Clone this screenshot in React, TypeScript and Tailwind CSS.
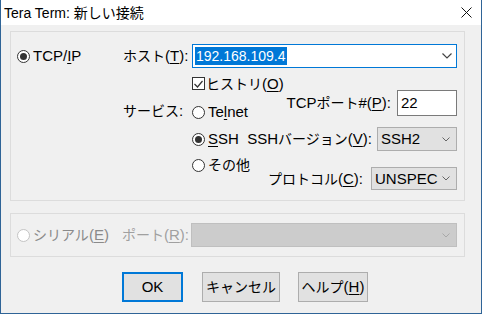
import React from "react";

const Radio = ({ checked, disabled }: { checked?: boolean; disabled?: boolean }) => (
  <span
    className={`flex w-[13px] h-[13px] shrink-0 items-center justify-center rounded-full border bg-white ${
      disabled ? "border-[#c4c4c4]" : "border-[#333333]"
    }`}
  >
    {checked && <span className="w-[7px] h-[7px] rounded-full bg-[#333333]" />}
  </span>
);

const Chevron = ({ color = "#444444", small }: { color?: string; small?: boolean }) =>
  small ? (
    <svg width="8" height="5" viewBox="0 0 8 5" className="ml-auto shrink-0">
      <path d="M0.5 0.5 L4 4 L7.5 0.5" stroke={color} fill="none" strokeWidth="1" />
    </svg>
  ) : (
    <svg width="10" height="6" viewBox="0 0 10 6" className="ml-auto shrink-0">
      <path d="M0.5 0.5 L5 5 L9.5 0.5" stroke={color} fill="none" strokeWidth="1.2" />
    </svg>
  );

const U = ({ children }: { children: React.ReactNode }) => (
  <span className="underline underline-offset-[2px] decoration-1">{children}</span>
);

// japanese runs are set a bit smaller, the kana in the original are narrow
const J = ({ children }: { children: React.ReactNode }) => <span className="text-[14px]">{children}</span>;

export default function App() {
  return (
    <div className="w-[482px] h-[314px] bg-[#f0f0f0] border-x border-b border-[#2f6497] flex flex-col text-[15px] leading-[18px] text-black whitespace-nowrap font-['Liberation_Sans','Noto_Sans_CJK_JP',sans-serif]">
      {/* title bar */}
      <div className="h-[25px] shrink-0 bg-white flex items-center pl-[3px] pr-[9px] text-[14px]">
        <span>Tera Term: 新しい接続</span>
        <svg width="11" height="11" viewBox="0 0 11 11" className="ml-auto">
          <path d="M0.5 0.5 L10.5 10.5 M10.5 0.5 L0.5 10.5" stroke="#111111" strokeWidth="1" />
        </svg>
      </div>

      <div className="flex flex-col px-[9px] pt-[6px]">
        {/* TCP/IP group */}
        <div className="w-[455px] h-[170px] border border-[#dcdcdc] flex pt-[12px] pl-[6px] pr-[7px]">
          <div className="w-[106px] h-[24px] flex items-center gap-[3px] shrink-0">
            <Radio checked />
            <span>
              TCP/<U>I</U>P
            </span>
          </div>

          <div className="flex-1 flex flex-col">
            <div className="flex h-[24px] items-center">
              <span className="w-[69px] shrink-0">
                <J>ホスト</J>(<U>T</U>):
              </span>
              <div className="w-[265px] h-[24px] border border-[#0078d7] bg-white flex items-center pl-[2px] pr-[4px]">
                <span className="bg-[#0078d7] text-white text-[14px] px-[1px]">192.168.109.4</span>
                <Chevron />
              </div>
            </div>

            <div className="mt-[9px] h-[13px] flex items-center pl-[69px] gap-[1px]">
              <span className="w-[13px] h-[13px] border border-[#333333] bg-white flex items-center justify-center">
                <svg width="9" height="8" viewBox="0 0 9 8">
                  <path d="M0.5 4 L3.5 7 L8.5 1" stroke="#333333" fill="none" strokeWidth="1.2" />
                </svg>
              </span>
              <span>
                <J>ヒストリ</J>(<U>O</U>)
              </span>
            </div>

            <div className="flex">
              <div className="w-[69px] shrink-0 pt-[12px]">
                <J>サービス</J>:
              </div>
              <div className="w-[46px] shrink-0 flex flex-col">
                <div className="mt-[13px] h-[18px] flex items-center gap-[3px]">
                  <Radio />
                  <span>
                    Te<U>l</U>net
                  </span>
                </div>
                <div className="mt-[9px] h-[18px] flex items-center gap-[3px]">
                  <Radio checked />
                  <span>
                    <U>S</U>SH
                  </span>
                </div>
                <div className="mt-[8px] h-[18px] flex items-center gap-[3px]">
                  <Radio />
                  <J>その他</J>
                </div>
              </div>

              <div className="flex-1 min-w-0 flex flex-col items-end">
                <div className="h-[26px] flex items-center gap-[6px]">
                  <span>
                    TCP<J>ポート</J>#(<U>P</U>):
                  </span>
                  <div className="w-[60px] h-[26px] border border-[#7a7a7a] bg-white flex items-center pl-[3px]">
                    22
                  </div>
                </div>
                <div className="mt-[11px] flex items-center gap-[5px]">
                  <span>
                    SSH<J>バージョン</J>(<U>V</U>):
                  </span>
                  <div className="w-[80px] h-[24px] border border-[#adadad] bg-[#e1e1e1] flex items-center pl-[3px] pr-[6px]">
                    SSH2
                    <Chevron small color="#666666" />
                  </div>
                </div>
                <div className="mt-[16px] flex items-center gap-[8px]">
                  <span>
                    <J>プロトコル</J>(<U>C</U>):
                  </span>
                  <div className="w-[86px] h-[23px] border border-[#adadad] bg-[#e1e1e1] flex items-center pl-[3px] pr-[6px]">
                    UNSPEC
                    <Chevron small color="#666666" />
                  </div>
                </div>
              </div>
            </div>
          </div>
        </div>

        {/* serial group */}
        <div className="mt-[12px] w-[455px] h-[44px] border border-[#dcdcdc] flex items-center pl-[6px] pr-[7px]">
          <div className="w-[105px] shrink-0 flex items-center gap-[3px] text-[#8a8a8a]">
            <Radio disabled />
            <span>
              <J>シリアル</J>(<U>E</U>)
            </span>
          </div>
          <span className="w-[69px] shrink-0 text-[#a0a0a0]">
            <J>ポート</J>(<U>R</U>):
          </span>
          <div className="flex-1 h-[24px] bg-[#cccccc] border border-[#bfbfbf] flex items-center pr-[6px]">
            <Chevron small color="#a8a8a8" />
          </div>
        </div>

        {/* buttons */}
        <div className="mt-[15px] flex pl-[112px]">
          <button className="w-[61px] h-[30px] border-2 border-[#0078d7] bg-[#e1e1e1] flex items-center justify-center">
            OK
          </button>
          <button className="ml-[19px] w-[78px] h-[30px] border border-[#adadad] bg-[#e1e1e1] flex items-center justify-center">
            <J>キャンセル</J>
          </button>
          <button className="ml-[18px] w-[70px] h-[30px] border border-[#adadad] bg-[#e1e1e1] flex items-center justify-center">
            <J>ヘルプ</J>(<U>H</U>)
          </button>
        </div>
      </div>
    </div>
  );
}
